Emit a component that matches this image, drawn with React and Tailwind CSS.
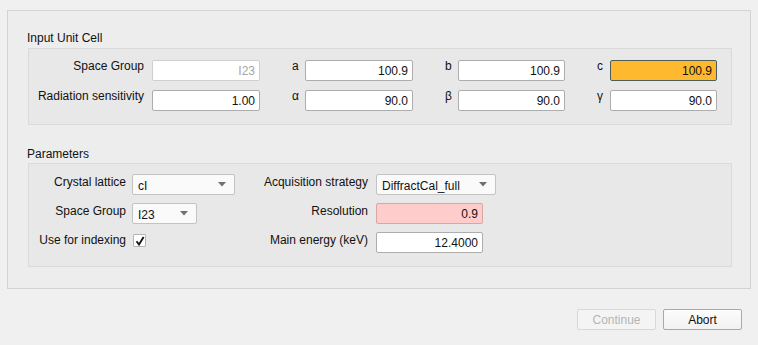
import React from 'react';

const FONT = { fontFamily: '"Liberation Sans", Arial, sans-serif' };

const NumField = ({ value, width = 'w-[108px]', tone = 'normal' }) => {
  const tones = {
    normal: 'bg-white border-[#adadad] text-[#111]',
    disabled: 'bg-white border-[#cfcfcf] text-[#a6a6a6]',
    warn: 'bg-[#ffb92e] border-[#4f5d58] text-[#111]',
    error: 'bg-[#ffcccc] border-[#d9a5a5] text-[#111]',
  };
  return (
    <div
      className={`${width} h-[21px] shrink-0 border rounded-[2px] flex items-center justify-end pr-[4px] text-[12px] ${tones[tone]}`}
    >
      {value}
    </div>
  );
};

const Dropdown = ({ value, width }) => (
  <div
    className={`${width} h-[21px] shrink-0 border border-[#c3c3c3] rounded-[2px] bg-[#fafafa] flex items-center justify-between pl-[5px] pr-[8px] text-[12px] text-[#111]`}
  >
    <span className="pt-[2px]">{value}</span>
    <svg width="8" height="5" viewBox="0 0 8 5">
      <path d="M0 0 L8 0 L4 4.5 Z" fill="#707070" />
    </svg>
  </div>
);

const SmallLabel = ({ children }) => (
  <div className="w-[45px] shrink-0 pl-[32px] -mt-[1px] self-start leading-[14px] text-[12px] text-[#111]">
    {children}
  </div>
);

const App = () => {
  return (
    <div className="w-[758px] h-[345px] bg-[#f0f0f0] overflow-hidden" style={FONT}>
      <div className="pt-[10px] pl-[7px]">
        <div className="w-[744px] h-[279px] border border-[#d3d3d3] bg-[#ededed] px-[20px] pt-[20px]">
          <div className="leading-[14px] text-[12px] text-[#111] -ml-[1px]">Input Unit Cell</div>
          <div className="mt-[3px] w-[704px] h-[77px] border border-[#dadada] bg-[#e8e8e8] pt-[11px] flex flex-col gap-[9px]">
            <div className="flex items-start">
              <div className="w-[123px] shrink-0 pr-[8px] text-right leading-[14px] text-[12px] text-[#111] -mt-[1px]">Space Group</div>
              <NumField value="I23" tone="disabled" />
              <SmallLabel>a</SmallLabel>
              <NumField value="100.9" />
              <SmallLabel>b</SmallLabel>
              <NumField value="100.9" width="w-[107px]" />
              <SmallLabel>c</SmallLabel>
              <NumField value="100.9" width="w-[107px]" tone="warn" />
            </div>
            <div className="flex items-start">
              <div className="w-[123px] shrink-0 pr-[8px] text-right leading-[14px] text-[12px] text-[#111] -mt-[1px]">Radiation sensitivity</div>
              <NumField value="1.00" />
              <SmallLabel>α</SmallLabel>
              <NumField value="90.0" />
              <SmallLabel>β</SmallLabel>
              <NumField value="90.0" width="w-[107px]" />
              <SmallLabel>γ</SmallLabel>
              <NumField value="90.0" width="w-[107px]" />
            </div>
          </div>

          <div className="mt-[22px] leading-[14px] text-[12px] text-[#111] -ml-[1px]">Parameters</div>
          <div className="mt-[2px] w-[704px] h-[104px] border border-[#dadada] bg-[#e8e8e8] pt-[10px] flex">
            <div className="flex flex-col gap-[8px]">
              <div className="flex items-start h-[21px]">
                <div className="w-[103px] shrink-0 pr-[6px] text-right leading-[14px] text-[12px] text-[#111] pt-[1px]">Crystal lattice</div>
                <Dropdown value="cI" width="w-[103px]" />
              </div>
              <div className="flex items-start h-[21px]">
                <div className="w-[103px] shrink-0 pr-[6px] text-right leading-[14px] text-[12px] text-[#111] pt-[1px]">Space Group</div>
                <Dropdown value="I23" width="w-[65px]" />
              </div>
              <div className="flex items-start h-[21px]">
                <div className="w-[103px] shrink-0 pr-[6px] text-right leading-[14px] text-[12px] text-[#111] pt-[1px]">Use for indexing</div>
                <div className="mt-[2px] ml-[1px] w-[13px] h-[13px] border border-[#b5b5b5] bg-white rounded-[1px] flex items-center justify-center">
                  <svg width="10" height="10" viewBox="0 0 10 10">
                    <path d="M1.5 5.2 L4 8.5 L8.6 1" fill="none" stroke="#111" strokeWidth="1.8" />
                  </svg>
                </div>
              </div>
            </div>
            <div className="flex flex-col gap-[8px]">
              <div className="flex items-start h-[21px]">
                <div className="w-[141px] shrink-0 pr-[8px] text-right leading-[14px] text-[12px] text-[#111] pt-[1px]">Acquisition strategy</div>
                <Dropdown value="DiffractCal_full" width="w-[120px]" />
              </div>
              <div className="flex items-start h-[21px]">
                <div className="w-[141px] shrink-0 pr-[8px] text-right leading-[14px] text-[12px] text-[#111] pt-[1px]">Resolution</div>
                <NumField value="0.9" width="w-[107px]" tone="error" />
              </div>
              <div className="flex items-start h-[21px]">
                <div className="w-[141px] shrink-0 pr-[8px] text-right leading-[14px] text-[12px] text-[#111] pt-[1px]">Main energy (keV)</div>
                <NumField value="12.4000" width="w-[107px]" />
              </div>
            </div>
          </div>
        </div>
      </div>

      <div className="mt-[20px] pr-[16px] flex justify-end gap-[7px]">
        <button
          disabled
          className="w-[79px] h-[21px] border border-[#d8d8d8] rounded-[2px] bg-[#f4f4f4] text-[12px] text-[#b4b4b4]"
        >
          Continue
        </button>
        <button className="w-[79px] h-[21px] border border-[#a9a9a9] rounded-[2px] bg-gradient-to-b from-[#fdfdfd] to-[#f1f1f1] text-[12px] text-[#111]">
          Abort
        </button>
      </div>
    </div>
  );
};

export default App;
